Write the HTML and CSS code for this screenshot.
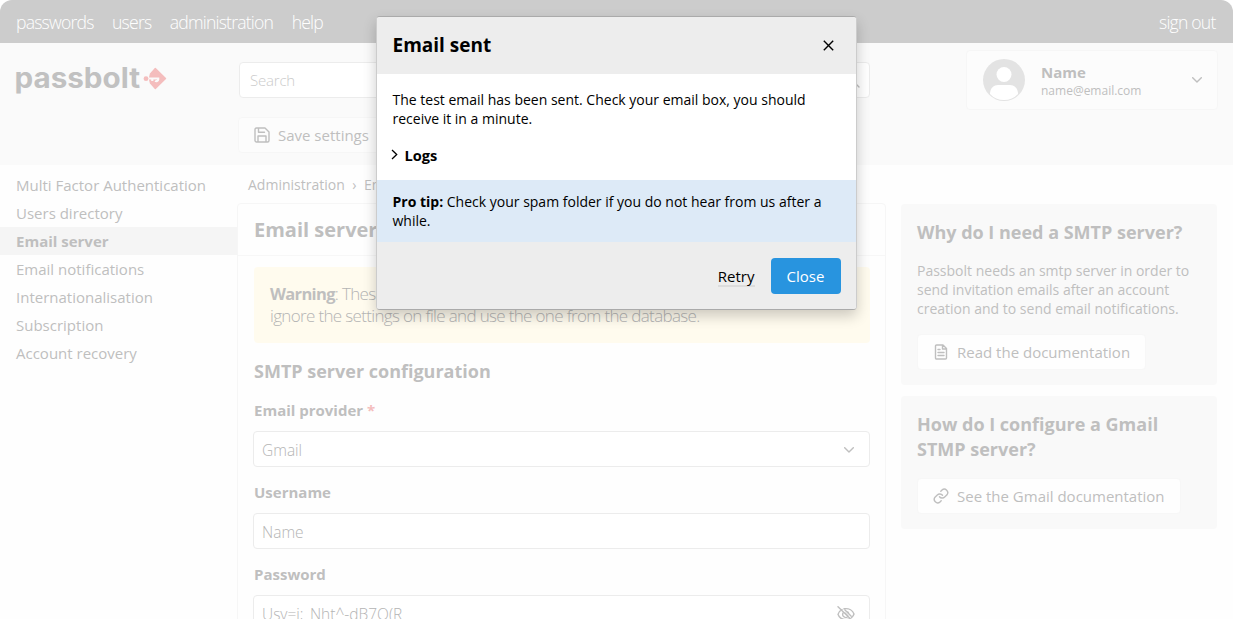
FILE: index.html
```
<!DOCTYPE html>
<html lang="en">
<head>
<meta charset="utf-8">
<title>Email server</title>
<link rel="stylesheet" href="styles.css">
</head>
<body>
<div class="page">
  <nav class="topbar">
    <a>passwords</a><a>users</a><a>administration</a><a>help</a>
    <a class="signout">sign out</a>
  </nav>
  <header class="header">
    <svg class="logo" width="152" height="34" viewBox="0 0 152 34">
      <text x="-.5" y="23.800" textLength="125.500" lengthAdjust="spacingAndGlyphs" class="logo-text">passbolt</text>
      <path d="M140.300 4.500 150.500 14.500 140.300 24.500 131.500 14.500Z" fill="#f4bdbd" stroke="#f4bdbd" stroke-width="1.400" stroke-linejoin="round"/>
      <path d="M129 9.500h5.800L133.800 14.500 134.800 19.500H129Z" fill="#fafafa"/>
      <path d="M134 14.500H143.200V15.500A1.800 1.800 0 0 1 140.200 16.700M137.300 14.500V17" fill="none" stroke="#fafafa" stroke-width="2.200"/>
      <circle cx="131" cy="14.700" r="2.400" fill="#f4bdbd"/>
    </svg>
    <div class="header-middle">
      <div class="search"><span>Search</span>
        <svg width="16" height="16" viewBox="0 0 16 16" class="stroke"><circle cx="7" cy="7" r="5"/><path d="m11 11 4 4"/></svg>
      </div>
      <button class="save">
        <svg class="stroke" width="16" height="16" viewBox="0 0 16 16"><path d="M2.500 1H11l4 4v8.500a1.500 1.500 0 0 1-1.500 1.500h-11A1.500 1.500 0 0 1 1 13.500v-11A1.500 1.500 0 0 1 2.500 1ZM4.500 1v4.200h6M4 15V9h8v6"/></svg>
        Save settings</button>
    </div>
    <div class="user">
      <svg width="42" height="42" viewBox="0 0 42 42"><circle cx="21" cy="21" r="21" fill="#e3e3e3"/><circle cx="21" cy="15.500" r="7.500" fill="#fff"/><path d="M7 35c0-6 4-9 8-9h12c4 0 8 3 8 9q-5.500 6-14 6T7 35Z" fill="#fff"/></svg>
      <div class="user-text"><b>Name</b><span>name@email.com</span></div>
      <svg class="stroke chevron" width="10" height="6" viewBox="0 0 10 6"><path d="m.7.700 4.300 4.300L9.300.700"/></svg>
    </div>
  </header>
  <div class="columns">
    <aside class="sidebar">
      <a>Multi Factor Authentication</a><a>Users directory</a><a class="selected">Email server</a><a>Email notifications</a><a>Internationalisation</a><a>Subscription</a><a>Account recovery</a>
    </aside>
    <main class="main">
      <div class="breadcrumb"><span>Administration</span><span>›</span><span>Email</span></div>
      <section class="card">
        <h1>Email server</h1>
        <div class="card-body">
          <p class="warning"><b>Warning</b>: These<br>ignore the settings on file and use the one from the database.</p>
          <h2>SMTP server configuration</h2>
          <label>Email provider <i>*</i></label>
          <div class="field">Gmail<svg class="stroke" width="10" height="6" viewBox="0 0 10 6"><path d="m.7.700 4.300 4.300L9.300.700"/></svg></div>
          <label>Username</label>
          <div class="field">Name</div>
          <label>Password</label>
          <div class="field">Usy=j;_Nht^-dB7Q(R
            <svg class="stroke eye" width="18" height="16" viewBox="0 0 18 16"><path d="M5 3.600C2.700 4.800 1.300 6.800 1 8.300c1 3 4 5.300 7.700 5.300 1.300 0 2.500-.3 3.600-.8M7 2.800c5.200-.7 8.800 2 10 5.200-.4 1.400-1.300 2.700-2.500 3.600M6.500 6.200a3 3 0 0 0 4.500 4.300M9.500 5.500c1.300.3 2.200 1.200 2.400 2.400M1 .7 16 15.300M8 7l3 3M8 4l6 6"/></svg></div>
        </div>
      </section>
    </main>
    <aside class="help">
      <section>
        <h3>Why do I need a SMTP server?</h3>
        <p>Passbolt needs an smtp server in order to send invitation emails after an account creation and to send email notifications.</p>
        <button><svg class="stroke" width="16" height="16" viewBox="0 0 16 16"><path d="M3.500 1H10l3.500 3.500V14a1 1 0 0 1-1 1h-9a1 1 0 0 1-1-1V2a1 1 0 0 1 1-1ZM9.500 1v4h4M5 5.500h2M5 8.500h6M5 11.500h6"/></svg>Read the documentation</button>
      </section>
      <section class="gmail-help">
        <h3>How do I configure a Gmail STMP server?</h3>
        <button><svg class="stroke" width="16" height="16" viewBox="0 0 16 16"><path d="M6.500 8.700a3.500 3.500 0 0 0 5.200.4l2.300-2.300A3.500 3.500 0 0 0 9.100 1.900L7.800 3.200M9.500 7.300a3.500 3.500 0 0 0-5.200-.4L2 9.200a3.500 3.500 0 0 0 4.900 4.900l1.300-1.300"/></svg>See the Gmail documentation</button>
      </section>
    </aside>
  </div>
</div>
<div class="dialog" role="dialog">
  <div class="dialog-header"><h2>Email sent</h2>
    <svg width="11" height="11" viewBox="0 0 11 11"><path d="m.8.800 9.400 9.400M10.200.800.800 10.200" fill="none" stroke="#000" stroke-width="1.400"/></svg>
  </div>
  <div class="dialog-content">
    <p>The test email has been sent. Check your email box, you should receive it in a minute.</p>
    <div class="logs"><svg width="7" height="11" viewBox="0 0 7 11"><path d="m1 1 4.700 4.500L1 10" fill="none" stroke="#000" stroke-width="1.300"/></svg><span>Logs</span></div>
  </div>
  <div class="tip"><b>Pro tip:</b> Check your spam folder if you do not hear from us after a while.</div>
  <div class="dialog-footer"><a>Retry</a><button>Close</button></div>
</div>
</body>
</html>
```
FILE: styles.css
```
* { box-sizing: border-box; }
html { background: #fff; }
body { margin: 0; height: 619px; overflow: hidden; font-family: "Open Sans", "Noto Sans", sans-serif; color: #bfbfbf; font-size: 14.4px; }
h1, h2, h3, p { margin: 0; }
b { font-weight: 700; }
button { font: inherit; color: inherit; }
.page { width: 1233px; height: 619px; overflow: hidden; border-radius: 12px 12px 0 0; background: #fefefe; }
.stroke { fill: none; stroke: #bfbfbf; stroke-width: 1.400; stroke-linejoin: round; stroke-linecap: round; flex: none; }

.topbar { height: 43px; padding: 0 17.500px 0 16px; display: flex; align-items: center; gap: 18.500px; background: #ccc; color: #fff; font-size: 17.6px; font-weight: 300; letter-spacing: -.8px; }
.signout { margin-left: auto; }

.header { height: 122px; background: #fafafa; display: flex; padding: 8px 15px 0 15px; }
.logo { margin-top: 13px; overflow: visible; }
.logo-text { font: 700 28px Inter, sans-serif; fill: #c1c1c1; }
.header-middle { margin: 11px 0 0 72px; width: 631px; }
.search { height: 36px; display: flex; align-items: center; justify-content: space-between; padding: 0 9px 0 10px; background: #fff; border: 1px solid #ececec; border-radius: 4px; font-size: 15px; font-weight: 300; letter-spacing: -.2px; color: #cbcbcb; }
.save { margin: 19px 0 0 -1px; height: 36px; padding: 0 15px; display: flex; align-items: center; gap: 8px; background: #fcfcfc; border: 1px solid #f6f6f6; border-radius: 4px; font-size: 15px; }
.user { margin: -1px 0 0 auto; width: 252px; height: 60px; display: flex; align-items: center; padding: 0 15px 0 16px; background: #fcfcfc; border: 1px solid #f6f6f6; border-radius: 4px; }
.user-text { margin: 2px 0 0 16px; display: flex; flex-direction: column; }
.user-text b { font-size: 15px; line-height: 19px; }
.user-text span { font-size: 12px; line-height: 17px; }
.chevron { margin-left: auto; }

.columns { display: flex; }
.sidebar { width: 237px; padding-top: 6px; }
.sidebar a { display: block; height: 28px; line-height: 28px; padding-left: 16px; font-size: 15px; }
.sidebar .selected { background: #f5f5f5; font-weight: 700; }

.main { width: 649px; padding-top: 10px; }
.breadcrumb { display: flex; gap: 7.500px; height: 28px; padding-left: 11px; line-height: 20px; font-size: 14px; }
.card { height: 440px; border: 1px solid #f6f6f6; border-radius: 4px; background: #fefefe; }
.card h1 { height: 52px; line-height: 52px; padding-left: 16px; font-size: 20px; border-bottom: 1px solid #f7f7f7; }
.card-body { padding: 11px 15px 0; }
.warning { height: 76px; margin-left: 1px; padding: 16px; line-height: 22px; background: #fffbee; border-radius: 4px; font-size: 17px; font-weight: 300; letter-spacing: -.66px; color: #b4b4b4; }
.warning b { font-size: 16.500px; color: #bfbfbf; }
.card h2 { margin: 15px 0 0 1px; line-height: 26px; font-size: 18px; }
.card label { display: block; margin: 16px 0 11px 1px; height: 20px; line-height: 20px; font-size: 15px; font-weight: 700; }
.card .field + label { margin-top: 15px; }
.card label i { font-style: normal; color: #f4bdbd; }
.field { height: 36px; display: flex; align-items: center; justify-content: space-between; padding: 1px 15px 0 8px; border: 1px solid #ececec; border-radius: 4px; background: #fff; font-size: 15.500px; font-weight: 300; color: #b4b4b4; }
.eye { margin-right: -1px; }

.help { width: 316px; margin: 39px 0 0 15px; }
.help section { height: 181px; padding: 16px; margin-bottom: 11px; background: #f9f9f9; border-radius: 4px; }
.help .gmail-help { height: 133px; }
.help h3 { font-size: 18px; line-height: 25px; }
.help p { margin-top: 16px; font-size: 14px; line-height: 19px; }
.help button { margin-top: 16px; height: 36px; padding: 0 15px; display: flex; align-items: center; gap: 8px; font-size: 15px; border: 1px solid #f7f7f7; border-radius: 4px; background: #fefefe; }

.dialog { position: absolute; left: 376px; top: 16px; width: 481px; height: 294px; background: #fff; border: 1px solid #aaa; border-color: #aaa #ccc #aaa; border-radius: 4px; overflow: hidden; color: #000; box-shadow: 0 6px 14px rgba(0,0,0,.2); font-size: 14px; line-height: 19px; }
.dialog-header { height: 57px; padding: 0 22px 1px 15.500px; display: flex; align-items: center; justify-content: space-between; background: #ededed; }
.dialog-header h2 { font-size: 19px; line-height: 24px; }
.dialog-content { height: 106px; padding: 16px 40px 0 15.500px; }
.logs { margin: 16px 0 0 -2px; display: flex; align-items: center; gap: 7px; font-size: 14.600px; font-weight: 700; line-height: 20px; }
.logs span { padding-top: 1px; }
.tip { height: 62px; padding: 12px 30px 0 15.500px; background: #ddeaf7; }
.dialog-footer { height: 68px; padding: 16px 15.500px; display: flex; justify-content: flex-end; align-items: flex-start; gap: 16px; background: #ededed; font-size: 15px; }
.dialog-footer a { margin-top: 9px; line-height: 18px; border-bottom: 2px solid #dcdcdc; }
.dialog-footer button { width: 70px; height: 36px; padding: 0; border: 0; border-radius: 4px; background: #2894df; color: #fff; }
```
